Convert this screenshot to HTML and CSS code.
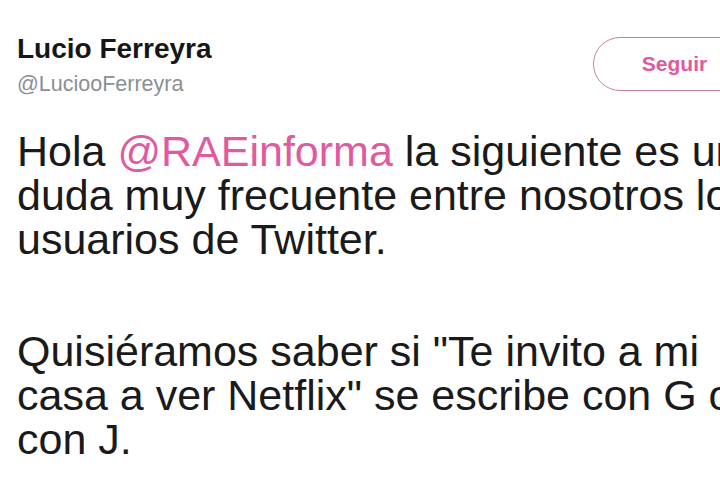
FILE: index.html
```html
<!DOCTYPE html>
<html lang="es">
<head>
    <meta charset="UTF-8">
    <meta name="viewport" content="width=device-width, initial-scale=1.0">
    <title>Tweet</title>
    <link rel="stylesheet" href="styles.css">
</head>
<body>
  <div class="tweet">
    <div class="head">
      <div class="user">
        <div class="name">Lucio Ferreyra</div>
        <div class="handle">@LuciooFerreyra</div>
      </div>
      <button class="follow">Seguir</button>
    </div>

    <div class="text">
      <p>Hola <span class="mention">@RAEinforma</span> la siguiente es una<br>
      duda muy frecuente entre nosotros los<br>
      usuarios de Twitter.</p>
      <p>Quisiéramos saber si "Te invito a mi<br>
      casa a ver Netflix" se escribe con G o<br>
      con J.</p>
    </div>
  </div>
</body>
</html>
```

FILE: styles.css
```css
body{
    margin: 0;
    background-color: #fff;
    overflow: hidden;
    font-family: "Liberation Sans", Arial, Helvetica, sans-serif;
}

.tweet{
    width: 780px;
    height: 480px;
    overflow: hidden;
    padding: 33px 24px 0 17px;
    box-sizing: border-box;
}

.head{
    display: flex;
    justify-content: space-between;
    align-items: flex-start;
}

.name{
    font-size: 28px;
    line-height: 32px;
    font-weight: bold;
    color: #161616;
}
.handle{
    margin-top: 5px;
    font-size: 21.5px;
    line-height: 28px;
    color: #8b8f94;
}

.follow{
    margin-top: 4px;
    width: 163px;
    height: 54px;
    border: 1.5px solid #c57fa6;
    border-radius: 27px;
    background: #fff;
    font-family: inherit;
    font-size: 21px;
    font-weight: bold;
    color: #df5a9e;
    padding: 0;
}

.text{
    margin-top: 31px;
    font-size: 43px;
    line-height: 44px;
    color: #1a1a1a;
    white-space: nowrap;
}
.text p{
    margin: 0 0 68px;
}
.mention{
    color: #e05aa0;
}
```
